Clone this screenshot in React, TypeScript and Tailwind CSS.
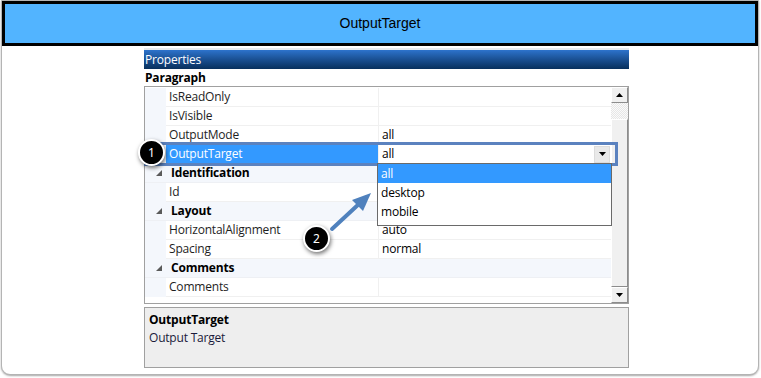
import React from 'react';

type Row =
  | { kind: 'prop'; name: string; value: string; selected?: boolean }
  | { kind: 'cat'; name: string };

const rows: Row[] = [
  { kind: 'prop', name: 'IsReadOnly', value: '' },
  { kind: 'prop', name: 'IsVisible', value: '' },
  { kind: 'prop', name: 'OutputMode', value: 'all' },
  { kind: 'prop', name: 'OutputTarget', value: 'all', selected: true },
  { kind: 'cat', name: 'Identification' },
  { kind: 'prop', name: 'Id', value: '' },
  { kind: 'cat', name: 'Layout' },
  { kind: 'prop', name: 'HorizontalAlignment', value: 'auto' },
  { kind: 'prop', name: 'Spacing', value: 'normal' },
  { kind: 'cat', name: 'Comments' },
  { kind: 'prop', name: 'Comments', value: '' },
];

const options = ['all', 'desktop', 'mobile'];

const Expander = () => (
  <svg width="7" height="7" viewBox="0 0 7 7">
    <polygon points="6,0 6,6 0,6" fill="#5a5a5a" />
  </svg>
);

const Caret = ({ up }: { up?: boolean }) => (
  <svg width="7" height="4" viewBox="0 0 7 4">
    <polygon points={up ? '3.5,0 7,4 0,4' : '0,0 7,0 3.5,4'} fill="#000" />
  </svg>
);

const Marker = ({ n, className }: { n: number; className: string }) => (
  <div
    className={`absolute w-[27px] h-[27px] rounded-full bg-black border-2 border-white flex items-center justify-center text-white text-[12px] shadow-[1px_2px_4px_rgba(0,0,0,0.55)] ${className}`}
  >
    {n}
  </div>
);

const PropRow: React.FC<{ row: Row }> = ({ row }) => {
  if (row.kind === 'cat') {
    return (
      <div className="flex h-[19px] bg-[#f4f7fc] border-b border-[#eef0f4]">
        <div className="w-[21px] flex items-center justify-end pr-[3px]">
          <Expander />
        </div>
        <div className="flex-1 flex items-center pl-[5px] font-bold text-black">{row.name}</div>
      </div>
    );
  }
  return (
    <div className="flex h-[19px]">
      <div className="w-[21px] bg-[#f4f7fc]" />
      <div
        className={`w-[212px] flex items-center pl-[3px] border-b ${
          row.selected ? 'bg-[#3399ff] text-white border-[#3399ff]' : 'text-[#1e1e1e] border-[#f0f0f0]'
        }`}
      >
        {row.name}
      </div>
      <div className="w-[233px] flex items-center pl-[3px] border-l border-b border-[#f0f0f0] text-black">
        {row.value}
        {row.selected && (
          <div className="ml-auto mr-[1px] w-[16px] h-[17px] bg-[#e9e9e9] border border-[#dcdcdc] flex items-center justify-center">
            <Caret />
          </div>
        )}
      </div>
    </div>
  );
};

const ScrollButton = ({ up }: { up?: boolean }) => (
  <div className="h-[16px] bg-[#f0f0f0] border border-t-white border-l-white border-r-[#8c8c8c] border-b-[#8c8c8c] flex items-center justify-center">
    <Caret up={up} />
  </div>
);

export default function App() {
  return (
    <div className="w-[761px] h-[378px] bg-white relative overflow-hidden">
      <div className="w-[758px] h-[375px] ml-[1px] border border-[#b4b4b4] rounded-b-[9px] shadow-[0_1px_2px_rgba(0,0,0,0.35)] bg-white flex flex-col">
        <div className="h-[45px] bg-[#52b4ff] border-[3px] border-black flex items-center justify-center text-[14px] text-black font-['Liberation_Sans',Arial,sans-serif]">
          OutputTarget
        </div>

        <div className="ml-[142px] w-[485px] mt-[2px] text-[12px] font-['Open_Sans','Noto_Sans',sans-serif] tracking-[-0.2px] relative">
          <div className="h-[21px] border-t-[2px] border-[#e4e9ef] bg-gradient-to-b from-[#2d73cc] to-[#08305d] text-white flex items-center pl-[1px]">
            Properties
          </div>
          <div className="h-[17px] flex items-center pl-[1px] font-bold text-black">Paragraph</div>

          <div className="h-[218px] border border-[#a0a0a0] bg-white flex relative">
            <div className="w-[466px] pt-[1px]">
              {rows.map((r, i) => (
                <PropRow key={i} row={r} />
              ))}
            </div>
            <div className="w-[17px] flex flex-col">
              <ScrollButton up />
              <div className="h-[16px] bg-[repeating-conic-gradient(#e6e6e6_0_25%,#fafafa_0_50%)] bg-[length:2px_2px]" />
              <div className="flex-1 bg-[#f0f0f0] border border-t-white border-l-white border-r-[#8c8c8c] border-b-[#8c8c8c]" />
              <ScrollButton />
            </div>

            <div className="absolute left-[-1px] top-[55px] w-[474px] h-[24px] border-[3px] border-[#5b82bf] pointer-events-none" />

            <div className="absolute left-[232px] top-[76px] w-[235px] h-[63px] bg-white border border-[#6a6a6a] text-black">
              {options.map((o, i) => (
                <div
                  key={o}
                  className={`h-[19px] flex items-center pl-[3px] ${i === 0 ? 'bg-[#3399ff] text-white' : ''}`}
                >
                  {o}
                </div>
              ))}
            </div>
          </div>

          <div className="mt-[3px] h-[61px] border border-[#a0a0a0] bg-[#eeeeee] px-[4px] pt-[3px] text-black leading-[18px]">
            <div className="font-bold">OutputTarget</div>
            <div className="text-[#1a1a3a]">Output Target</div>
          </div>
        </div>
      </div>

      <Marker n={1} className="left-[138px] top-[139px]" />
      <Marker n={2} className="left-[303px] top-[225px]" />

      <svg className="absolute left-0 top-0 pointer-events-none" width="761" height="378">
        <line x1="332" y1="229" x2="360" y2="203" stroke="#4f81bd" strokeWidth="4" strokeLinecap="round" />
        <polygon points="371,193 352,200 363,211" fill="#4f81bd" />
      </svg>
    </div>
  );
}
